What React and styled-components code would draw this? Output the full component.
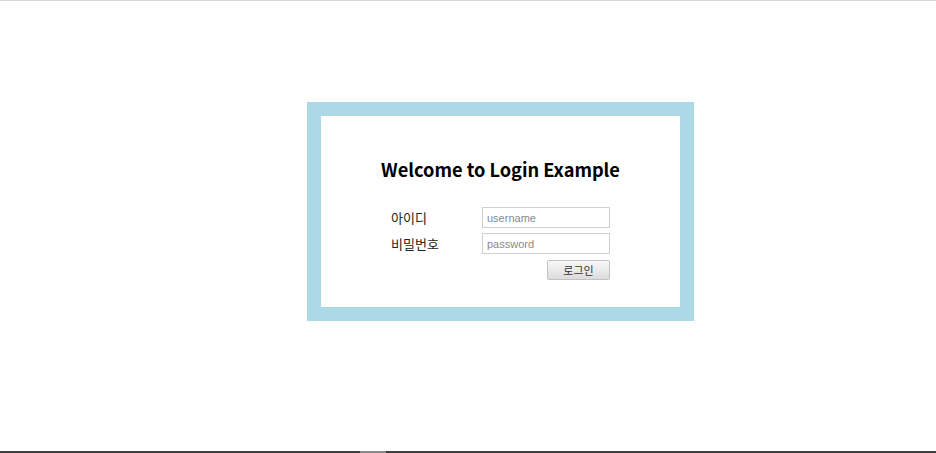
import React from 'react'
import styled, { createGlobalStyle } from 'styled-components'

const GlobalStyle = createGlobalStyle`
    html, body {
        margin: 0;
        padding: 0;
        background: #fff;
    }
    body {
        font-family: "Noto Sans CJK KR", "Noto Sans", sans-serif;
    }
`

const Page = styled.div`
    display: flex;
    flex-direction: column;
    height: 100vh;
    border-top: 1px solid #d6d6d6;
    box-sizing: border-box;
`

const Main = styled.main`
    flex: 1;
    padding: 101px 0 0 307px;
`

const Frame = styled.div`
    width: 387px;
    height: 219px;
    box-sizing: border-box;
    border: 14px solid #add8e6;
    background: #fff;
`

const Content = styled.div`
    display: flex;
    flex-direction: column;
    align-items: center;
    padding-top: 41px;
`

const Title = styled.h1`
    margin: 0 0 26px;
    font-size: 18.2px;
    line-height: 24px;
    font-weight: 700;
    color: #000;
`

const Form = styled.form`
    display: grid;
    grid-template-columns: 91px 128px;
    row-gap: 5px;
    align-items: center;
`

const Label = styled.label`
    font-size: 13px;
    line-height: 18px;
    color: #222;
`

const Input = styled.input`
    width: 128px;
    height: 21px;
    box-sizing: border-box;
    border: 1px solid #cfcfcf;
    padding: 0 4px;
    font-family: "Liberation Sans", Arial, sans-serif;
    font-size: 11px;
    outline: none;
    &::placeholder {
        color: #8a8a8a;
    }
`

const Button = styled.button`
    grid-column: 2;
    justify-self: end;
    margin-top: 1px;
    width: 63px;
    height: 20px;
    box-sizing: border-box;
    border: 1px solid #c2c2c2;
    border-radius: 2px;
    background: linear-gradient(#f8f8f8, #dcdcdc);
    font-family: "Noto Sans CJK KR", sans-serif;
    font-size: 11px;
    line-height: 18px;
    color: #333;
    padding: 0;
`

const BottomBar = styled.div`
    display: flex;
    height: 2px;
    background: #3f3f3f;
`

const Thumb = styled.div`
    margin-left: 360px;
    width: 26px;
    background: #8a8a8a;
`

export default function App() {
    return (
        <>
            <GlobalStyle />
            <Page>
                <Main>
                    <Frame>
                        <Content>
                            <Title>Welcome to Login Example</Title>
                            <Form onSubmit={e => e.preventDefault()}>
                                <Label>아이디</Label>
                                <Input placeholder="username" />
                                <Label>비밀번호</Label>
                                <Input type="password" placeholder="password" />
                                <Button>로그인</Button>
                            </Form>
                        </Content>
                    </Frame>
                </Main>
                <BottomBar>
                    <Thumb />
                </BottomBar>
            </Page>
        </>
    )
}
